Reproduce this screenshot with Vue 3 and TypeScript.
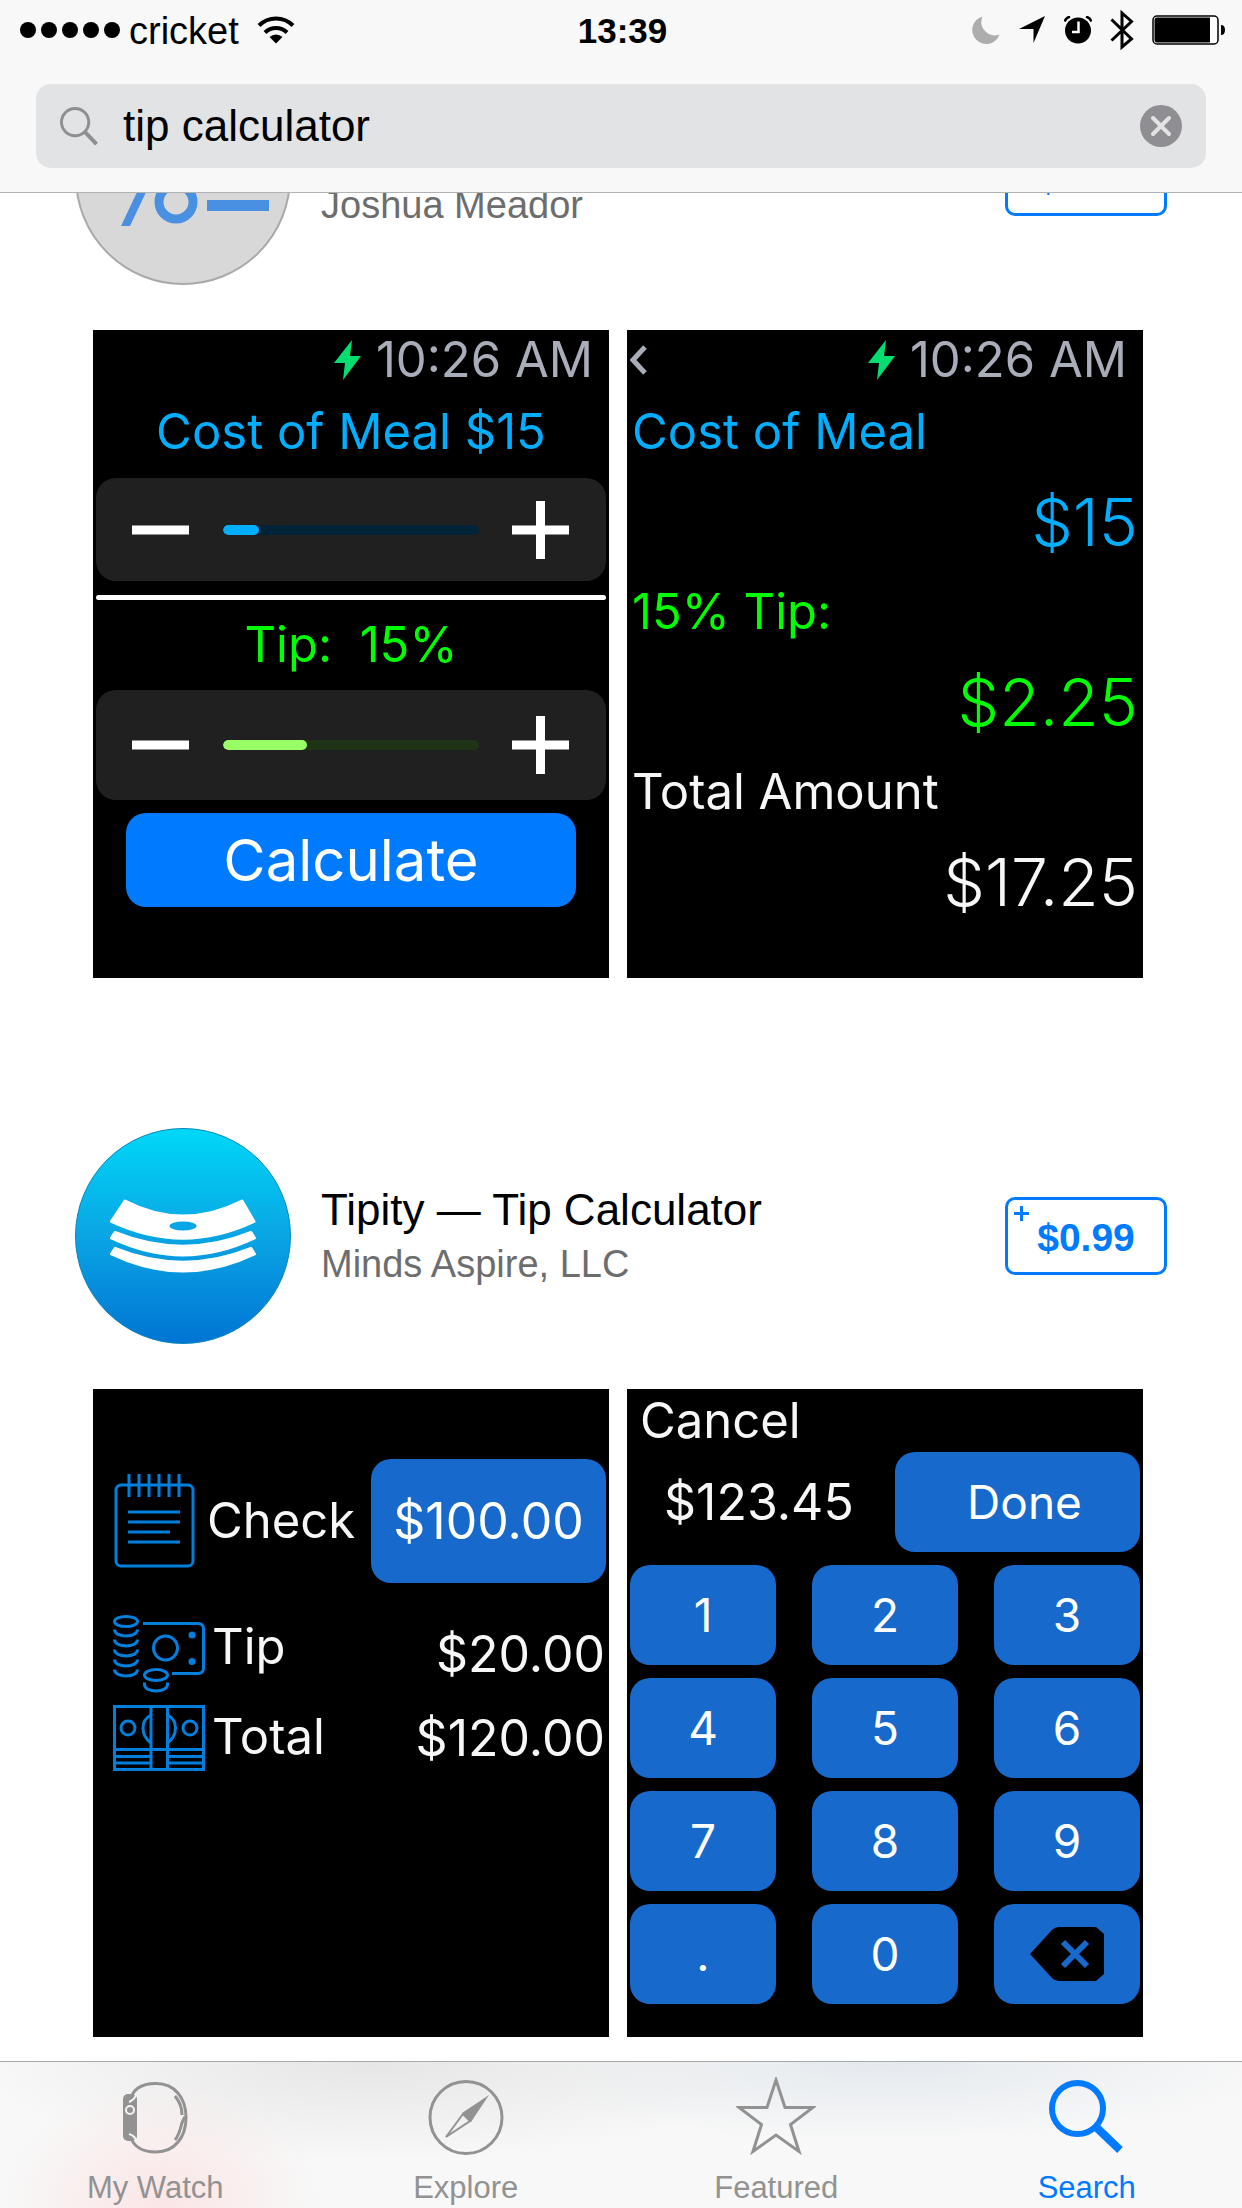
<script setup lang="ts">
import { ref } from 'vue'

interface Line {
  label: string
  value: string
  tone: string
}

interface Tab {
  id: string
  label: string
}

const query = ref('tip calculator')

const receipt: Line[] = [
  { label: 'Cost of Meal', value: '$15', tone: 'blue' },
  { label: '15% Tip:', value: '$2.25', tone: 'green' },
  { label: 'Total Amount', value: '$17.25', tone: 'white' },
]

const keys: string[] = ['1', '2', '3', '4', '5', '6', '7', '8', '9', '.', '0']

const tabs: Tab[] = [
  { id: 'watch', label: 'My Watch' },
  { id: 'explore', label: 'Explore' },
  { id: 'featured', label: 'Featured' },
  { id: 'search', label: 'Search' },
]
const activeTab = 'search'
</script>

<template>
  <div class="app">
    <header class="top">
      <div class="status">
        <div class="status-left">
          <svg class="dots" viewBox="0 0 102 18" aria-hidden="true">
            <circle v-for="n in 5" :key="n" :cx="9 + (n - 1) * 21" cy="9" r="8" />
          </svg>
          <span class="carrier">cricket</span>
          <svg class="wifi" viewBox="0 0 38 28" aria-hidden="true">
            <path d="M2 9.500a24 24 0 0 1 34 0" fill="none" stroke="#000" stroke-width="4" />
            <path d="M8 16.500a16 16 0 0 1 22 0" fill="none" stroke="#000" stroke-width="4" />
            <path d="M19 27.500l-6.500-6.500a9.500 9.500 0 0 1 13 0z" />
          </svg>
        </div>
        <time class="clock">13:39</time>
        <div class="status-right">
          <svg class="moon" viewBox="0 0 28 28" aria-hidden="true">
            <path d="M10.500 0.500A14 14 0 1 0 27.500 18.500 13.500 13.500 0 0 1 10.500 0.500z" fill="#adadad" />
          </svg>
          <svg class="arrow" viewBox="0 0 28 28" aria-hidden="true"><path d="M27 0L15.500 27V13H1z" /></svg>
          <svg class="alarm" viewBox="0 0 28 28" aria-hidden="true">
            <circle cx="14" cy="14.500" r="13" />
            <path d="M0.500 5.500A9 9 0 0 1 6 0.500M22 0.500a9 9 0 0 1 5.500 5" fill="none" stroke="#000" stroke-width="2.500" />
            <path d="M14.500 5.500v10.500H8" fill="none" stroke="#fff" stroke-width="2.500" />
          </svg>
          <svg class="bluetooth" viewBox="0 0 24 42" aria-hidden="true">
            <path d="M1.500 10.500L21.500 30 12 38V4l9.500 8.500L1.500 31.500" fill="none" stroke="#000" stroke-width="3" />
          </svg>
          <svg class="battery" viewBox="0 0 74 30" aria-hidden="true">
            <rect x="1" y="1" width="65" height="28" rx="4" fill="#fff" stroke="#000" stroke-width="1.500" />
            <path d="M5 2.500h53v25H5a2.500 2.500 0 0 1-2.500-2.500V5A2.500 2.500 0 0 1 5 2.500z" />
            <path d="M69 10q4 0 4 5t-4 5z" />
          </svg>
        </div>
      </div>
      <form class="search" @submit.prevent>
        <label for="query" class="search-label" aria-label="Search">
          <svg viewBox="0 0 40 40" aria-hidden="true">
            <g fill="none" stroke="#8e8e93">
              <circle cx="15.500" cy="15.500" r="14" stroke-width="3" />
              <path d="M25.500 25.500L37.500 38" stroke-width="4" />
            </g>
          </svg>
        </label>
        <input id="query" v-model="query" type="text" />
        <button class="clear" type="button" aria-label="Clear" @click="query = ''">
          <svg viewBox="0 0 42 42" aria-hidden="true">
            <circle cx="21" cy="21" r="21" fill="#8e8e93" />
            <path d="M13 13l16 16M29 13L13 29" stroke="#e2e3e5" stroke-width="4" stroke-linecap="round" />
          </svg>
        </button>
      </form>
    </header>

    <main class="results">
      <article class="result">
        <div class="info">
          <svg class="app-icon" viewBox="0 0 216 216" aria-hidden="true">
            <circle cx="108" cy="108" r="107" fill="#d8d8d8" stroke="#a9a9a9" stroke-width="2" />
            <g fill="#4a90e2">
              <path d="M46 157h9L101 60h-9z" />
              <rect x="132" y="131" width="62" height="11" />
            </g>
            <circle cx="101" cy="133" r="17" fill="none" stroke="#4a90e2" stroke-width="9" />
          </svg>
          <div class="names">
            <h2>Tip Calculator %</h2>
            <p>Joshua Meador</p>
          </div>
          <button class="price" type="button">$0.99</button>
        </div>
        <div class="shots">
          <section class="screen">
            <div class="watch-status">
              <svg class="bolt" viewBox="0 0 28 40" aria-hidden="true"><path d="M18 0L0 23h11L9 40 27 16H16z" fill="#04de71" /></svg>
              <span>10:26 AM</span>
            </div>
            <p class="caption first blue">Cost of Meal $15</p>
            <div class="stepper">
              <button type="button" aria-label="Less"><svg viewBox="0 0 58 58"><path d="M0 29h57" /></svg></button>
              <progress class="cost" value="14" max="100" aria-label="Cost of meal"></progress>
              <button type="button" aria-label="More"><svg viewBox="0 0 58 58"><path d="M0 29h57M28.500 0v58" /></svg></button>
            </div>
            <hr />
            <p class="caption green">Tip:&nbsp; 15%</p>
            <div class="stepper tall">
              <button type="button" aria-label="Less"><svg viewBox="0 0 58 58"><path d="M0 29h57" /></svg></button>
              <progress class="tip" value="33" max="100" aria-label="Tip percent"></progress>
              <button type="button" aria-label="More"><svg viewBox="0 0 58 58"><path d="M0 29h57M28.500 0v58" /></svg></button>
            </div>
            <button class="calculate" type="button">Calculate</button>
          </section>

          <section class="screen">
            <div class="watch-status">
              <button class="back" type="button" aria-label="Back">
                <svg viewBox="0 0 18 30"><path d="M15 2L3 15l12 13" fill="none" stroke="#a9adb9" stroke-width="5" /></svg>
              </button>
              <svg class="bolt" viewBox="0 0 28 40" aria-hidden="true"><path d="M18 0L0 23h11L9 40 27 16H16z" fill="#04de71" /></svg>
              <span>10:26 AM</span>
            </div>
            <dl class="receipt">
              <template v-for="line in receipt" :key="line.label">
                <dt :class="line.tone">{{ line.label }}</dt>
                <dd :class="line.tone">{{ line.value }}</dd>
              </template>
            </dl>
          </section>
        </div>
      </article>

      <article class="result">
        <div class="info">
          <svg class="app-icon" viewBox="0 0 216 216" aria-hidden="true">
            <defs>
              <linearGradient id="tipity" x1="0" y1="0" x2="0" y2="1">
                <stop offset="0" stop-color="#00d8f8" />
                <stop offset="0.5" stop-color="#0aa5e4" />
                <stop offset="1" stop-color="#0074d4" />
              </linearGradient>
            </defs>
            <circle cx="108" cy="108" r="107.500" fill="url(#tipity)" stroke="#0a86b8" stroke-width="1" />
            <g fill="#fff" stroke="#fff" stroke-width="3" stroke-linejoin="round">
              <path d="M50 73Q108 103 167 73L179 93.500Q108 127 36.500 93.500z" />
              <path d="M40 104.500Q108 132 176 104.500L179.500 110Q108 144 36.500 110z" />
              <path d="M40 120.500Q108 148 176 120.500L179.500 126Q108 160 36.500 126z" />
            </g>
            <ellipse cx="108" cy="98" rx="13.500" ry="4.500" fill="#0aa5e4" />
          </svg>
          <div class="names">
            <h2>Tipity — Tip Calculator</h2>
            <p>Minds Aspire, LLC</p>
          </div>
          <button class="price" type="button">
            <svg class="plus" viewBox="0 0 15 15" aria-hidden="true"><path d="M0 7.500h15M7.500 0v15" stroke="#007aff" stroke-width="3" /></svg>
            $0.99
          </button>
        </div>
        <div class="shots">
          <section class="screen bill">
            <div class="bill-row check">
              <svg class="glyph" viewBox="-1 0 92 94" aria-hidden="true">
                <rect x="2" y="11" width="77" height="81" rx="5" />
                <path d="M15 0v23M25 0v23M35 0v23M45 0v23M55 0v23M65 0v23M14 38h52M14 48h52M14 58h42M14 68h52" />
              </svg>
              <span class="name">Check</span>
              <button class="blue-key amount-key" type="button">$100.00</button>
            </div>
            <div class="bill-row">
              <svg class="glyph" viewBox="0 0 92 78" aria-hidden="true">
                <ellipse cx="13" cy="6.500" rx="11.500" ry="5" />
                <path v-for="n in 5" :key="n" :d="`M1.500 ${4.5 + n * 10}c0 8.500 23 8.500 23 0`" />
                <path d="M30 8.500h55q5.500 0 5.500 5.500v39q0 5.500-5.500 5.500H59" />
                <circle cx="52.500" cy="33" r="12" />
                <ellipse cx="43" cy="60" rx="11.500" ry="5.500" />
                <path d="M31.500 67.500v2c0 8.500 23 8.500 23 0v-2" />
                <g class="solid"><circle cx="79" cy="20" r="3.500" /><circle cx="79" cy="46.500" r="3.500" /></g>
              </svg>
              <span class="name">Tip</span>
              <span class="amount">$20.00</span>
            </div>
            <div class="bill-row">
              <svg class="glyph" viewBox="0 0 92 66" aria-hidden="true">
                <path d="M1.500 1.500h89v63h-89zM38 1.500v63M54.500 1.500v63M1.500 44.500h89M1.500 51.500H38M1.500 58H38M54.500 51.500h36M54.500 58h36" />
                <circle cx="15" cy="23" r="7" /><circle cx="77" cy="23" r="7" />
                <path d="M38 10q-8 4-8 13t8 15M54.500 10q8 4 8 13t-8 15" />
              </svg>
              <span class="name">Total</span>
              <span class="amount">$120.00</span>
            </div>
          </section>

          <section class="screen pad">
            <button class="cancel" type="button">Cancel</button>
            <div class="entry">
              <output class="amount">$123.45</output>
              <button class="blue-key done" type="button">Done</button>
            </div>
            <div class="keypad">
              <button v-for="key in keys" :key="key" class="blue-key" type="button">{{ key }}</button>
              <button class="blue-key" type="button" aria-label="Delete">
                <svg class="delete" viewBox="0 0 74 54" aria-hidden="true">
                  <path d="M0 27L22 3q3-3 7-3h37l8 7v40l-8 7H29q-4 0-7-3z" fill="#000" />
                  <path d="M33 15l24 24M57 15L33 39" stroke="#1769cb" stroke-width="6" />
                </svg>
              </button>
            </div>
          </section>
        </div>
      </article>
    </main>

    <nav class="tabs">
      <a v-for="tab in tabs" :key="tab.id" href="#" :class="{ active: tab.id === activeTab }">
        <svg v-if="tab.id === 'watch'" viewBox="0 0 80 80" aria-hidden="true">
          <g fill="none" stroke="currentColor" stroke-width="3">
            <path d="M15 25C17 12 27 6.500 41 6.500 60 6.500 71 21 71 40.500S60 75 41 75C27 75 17 69 15 57" />
            <path d="M60 19c5 6 7 12 7 19M70 40c-5 6-3 14-10 23" />
          </g>
          <rect x="8" y="17" width="14" height="47" rx="5" fill="currentColor" />
          <circle cx="15" cy="33" r="4" fill="none" stroke="#f4f4f4" stroke-width="2" />
          <path d="M14 25q7-3 7-9M14 57q7 2 7 8" fill="none" stroke="#f4f4f4" stroke-width="2" />
        </svg>
        <svg v-else-if="tab.id === 'explore'" viewBox="0 0 80 80" aria-hidden="true">
          <circle cx="40" cy="40.500" r="36" fill="none" stroke="currentColor" stroke-width="3" />
          <path d="M63 18L36 36l9 9z" fill="currentColor" />
          <path d="M20 60l17-23 7 7z" fill="none" stroke="currentColor" stroke-width="2" />
        </svg>
        <svg v-else-if="tab.id === 'featured'" viewBox="0 0 80 80" aria-hidden="true">
          <path d="M40 3l9 27.500h28L54.500 47.500 63 74.500 40 58 17 74.500 25.500 47.500 3 30.500h28z" fill="none" stroke="currentColor" stroke-width="3" />
        </svg>
        <svg v-else viewBox="0 0 80 80" aria-hidden="true">
          <circle cx="30.500" cy="31.500" r="25.500" fill="none" stroke="currentColor" stroke-width="6" />
          <path d="M49 50l24 23" stroke="currentColor" stroke-width="8" />
        </svg>
        <span>{{ tab.label }}</span>
      </a>
    </nav>
  </div>
</template>

<style>
body {
  margin: 0;
  background: #fff;
}
</style>

<style scoped>
.app {
  font-family: "Liberation Sans", Arial, sans-serif;
  color: #000;
}
.app * {
  box-sizing: border-box;
}
button {
  margin: 0;
  padding: 0;
  border: 0;
  background: none;
  color: inherit;
  font: inherit;
  cursor: pointer;
}
svg {
  display: block;
  flex: none;
}
h2,
p,
dl,
dd {
  margin: 0;
  font-weight: inherit;
}

/* status bar and search field */
.top {
  position: fixed;
  z-index: 2;
  top: 0;
  left: 0;
  right: 0;
  padding-bottom: 24px;
  border-bottom: 1px solid #b2b2b2;
  background: #f8f8f8;
}
.status {
  display: grid;
  grid-template-columns: 1fr auto 1fr;
  align-items: center;
  height: 60px;
  margin-bottom: 24px;
  padding: 0 16px 0 19px;
  font-size: 38px;
}
.status-left,
.status-right {
  display: flex;
  align-items: center;
}
.status-left {
  gap: 8px;
}
.dots {
  width: 102px;
  height: 18px;
}
.carrier,
.clock {
  padding-top: 2px;
}
.wifi {
  width: 38px;
  height: 28px;
  margin-left: 10px;
}
.clock {
  font-size: 35px;
  font-weight: 700;
}
.status-right {
  justify-content: flex-end;
  gap: 18px;
}
.moon,
.arrow,
.alarm {
  width: 28px;
  height: 28px;
}
.bluetooth {
  width: 24px;
  height: 42px;
}
.battery {
  width: 74px;
  height: 30px;
}
.search {
  display: flex;
  align-items: center;
  height: 84px;
  margin: 0 36px;
  padding: 0 24px;
  border-radius: 15px;
  background: #e2e3e5;
}
.search-label svg {
  width: 39px;
  height: 39px;
}
.search input {
  flex: 1;
  min-width: 0;
  height: 84px;
  margin: 0;
  padding: 0 24px;
  border: 0;
  outline: 0;
  background: none;
  color: #000;
  font: 44px "Liberation Sans", Arial, sans-serif;
}
.clear svg {
  width: 42px;
  height: 42px;
}

/* result list */
.results {
  display: flex;
  flex-direction: column;
  gap: 150px;
  padding: 69px 0 171px;
}
.info {
  display: flex;
  align-items: center;
  gap: 30px;
  padding: 0 75px;
}
.app-icon {
  width: 216px;
  height: 216px;
}
.names {
  flex: 1;
}
.names h2 {
  font-size: 44px;
  line-height: 56px;
}
.names p {
  color: #6d6d6d;
  font-size: 38px;
  line-height: 52px;
}
.price {
  position: relative;
  width: 162px;
  height: 78px;
  padding-top: 4px;
  border: 3px solid #007aff;
  border-radius: 10px;
  color: #007aff;
  font-size: 39px;
  font-weight: 700;
}
.plus {
  position: absolute;
  top: 6px;
  left: 6px;
  width: 15px;
  height: 15px;
}
.shots {
  display: grid;
  grid-template-columns: repeat(2, minmax(0, 1fr));
  gap: 18px;
  margin-top: 45px;
  padding: 0 99px 0 93px;
}

/* watch screens */
.screen {
  aspect-ratio: 516 / 648;
  background: #000;
  color: #f7f7f7;
  font-family: Inter, Roboto, sans-serif;
  font-size: 49px;
  font-weight: 400;
}
.blue {
  color: #00aeff;
}
.green {
  color: #00ff00;
}
.white {
  color: #f7f7f7;
}
.watch-status {
  display: flex;
  align-items: center;
  justify-content: flex-end;
  gap: 14px;
  height: 60px;
  padding: 0 16px 0 3px;
  color: #a9adb9;
  line-height: 60px;
}
.bolt {
  width: 28px;
  height: 40px;
}
.back {
  margin-right: auto;
}
.back svg {
  width: 18px;
  height: 30px;
}
.caption {
  line-height: 90px;
  text-align: center;
}
.caption.first {
  line-height: 84px;
}
.stepper {
  display: flex;
  align-items: center;
  gap: 33px;
  height: 103px;
  margin: 4px 3px 0;
  padding: 0 36px;
  border-radius: 20px;
  background: #202020;
}
.stepper.tall {
  height: 110px;
  margin-top: 0;
}
.stepper svg {
  width: 58px;
  height: 58px;
  fill: none;
  stroke: #fff;
  stroke-width: 9;
}
.stepper progress {
  flex: 1;
  min-width: 0;
  height: 10px;
  appearance: none;
  border: 0;
  border-radius: 5px;
  overflow: hidden;
}
.stepper progress::-webkit-progress-bar {
  background: transparent;
}
.stepper progress::-webkit-progress-value {
  border-radius: 5px;
}
.cost {
  background: #002337;
}
.cost::-webkit-progress-value {
  background: #00aeff;
}
.tip {
  background: #1f3317;
}
.tip::-webkit-progress-value {
  background: #99ff66;
}
hr {
  height: 5px;
  margin: 14px 3px 0;
  border: 0;
  border-radius: 3px;
  background: #fff;
}
.calculate {
  display: block;
  width: calc(100% - 66px);
  height: 94px;
  margin: 13px 33px 0;
  border-radius: 20px;
  background: #007aff;
  color: #fff;
  font-size: 58px;
}
.receipt {
  padding: 0 5px;
}
.receipt dt {
  line-height: 84px;
}
.receipt dd {
  font-size: 66px;
  font-weight: 300;
  line-height: 96px;
  text-align: right;
}
.blue-key {
  display: flex;
  align-items: center;
  justify-content: center;
  height: 100px;
  border-radius: 20px;
  background: #1769cb;
  color: #fff;
  font-size: 46px;
}
.bill {
  display: flex;
  flex-direction: column;
  gap: 12px;
  padding-top: 70px;
}
.bill-row {
  display: flex;
  align-items: center;
  padding: 0 4px 0 20px;
  line-height: 64px;
}
.bill-row.check {
  margin-bottom: 20px;
  padding-right: 3px;
}
.glyph {
  width: 92px;
  fill: none;
  stroke: #0080dc;
  stroke-width: 3;
}
.solid {
  fill: #0080dc;
  stroke: none;
}
.name {
  flex: 1;
  align-self: flex-start;
  margin-left: 7px;
}
.check .name {
  align-self: center;
  margin-left: 2px;
}
.amount,
.amount-key {
  font-size: 50px;
}
.amount-key {
  width: 235px;
  height: 124px;
}
.pad {
  padding: 0 3px;
}
.cancel {
  display: block;
  margin-left: 10px;
  line-height: 63px;
}
.entry {
  display: flex;
  align-items: center;
  justify-content: space-between;
  padding-left: 34px;
}
.done {
  width: 245px;
  padding-left: 14px;
}
.keypad {
  display: grid;
  grid-template-columns: repeat(3, 1fr);
  gap: 13px 36px;
  margin-top: 13px;
}
.delete {
  width: 74px;
  height: 54px;
}

/* tab bar */
.tabs {
  position: fixed;
  z-index: 2;
  bottom: 0;
  left: 0;
  right: 0;
  display: grid;
  grid-template-columns: repeat(4, 1fr);
  height: 147px;
  border-top: 1px solid #a9a9a9;
  background:
    radial-gradient(ellipse 160px 130px at 13% 100%, #fbe5e5, rgba(251, 229, 229, 0)),
    radial-gradient(ellipse 32% 100px at 30% 0, #e6e6e6, rgba(230, 230, 230, 0)),
    radial-gradient(ellipse 32% 80px at 71% 0, #e4e9ee, rgba(228, 233, 238, 0)),
    #f8f8f8;
}
.tabs a {
  display: flex;
  flex-direction: column;
  align-items: center;
  gap: 13px;
  padding-top: 15px;
  color: #929292;
  font-size: 31px;
  line-height: 36px;
  text-decoration: none;
}
.tabs svg {
  width: 80px;
  height: 80px;
}
.tabs a.active {
  color: #007aff;
}
</style>
